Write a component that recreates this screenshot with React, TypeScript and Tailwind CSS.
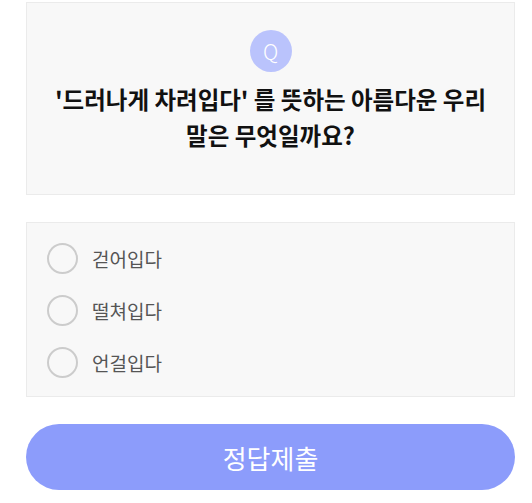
import React from "react";

const options = ["걷어입다", "떨쳐입다", "언걸입다"];

export default function App() {
  return (
    <div
      className="w-[532px] h-[503px] bg-white pt-[2px] pl-[26px]"
      style={{ fontFamily: '"Noto Sans CJK KR", "Noto Sans", sans-serif' }}
    >
      <div className="w-[489px] h-[193px] bg-[#f8f8f8] border border-[#ebebeb] flex flex-col items-center pt-[27px]">
        <div className="w-[42px] h-[42px] rounded-full bg-[#bac3fc] flex items-center justify-center text-white text-[21px] font-light leading-none">
          Q
        </div>
        <div className="mt-[9px] text-center text-[23.5px] leading-[36px] font-bold text-[#111]">
          '드러나게 차려입다' 를 뜻하는 아름다운 우리
          <br />
          말은 무엇일까요?
        </div>
      </div>
      <div className="mt-[27px] w-[489px] h-[175px] bg-[#f8f8f8] border border-[#ebebeb] flex flex-col pt-[20px] pl-[20px] gap-[21px]">
        {options.map((o) => (
          <div key={o} className="flex items-center h-[31px]">
            <div className="w-[31px] h-[31px] rounded-full border-2 border-[#cccccc] bg-[#f8f8f8]" />
            <span className="ml-[14px] text-[19px] text-[#555] leading-none">{o}</span>
          </div>
        ))}
      </div>
      <button className="mt-[27px] w-[489px] h-[66px] rounded-full bg-[#8c9cfb] text-white text-[26px] flex items-center justify-center">
        정답제출
      </button>
    </div>
  );
}
